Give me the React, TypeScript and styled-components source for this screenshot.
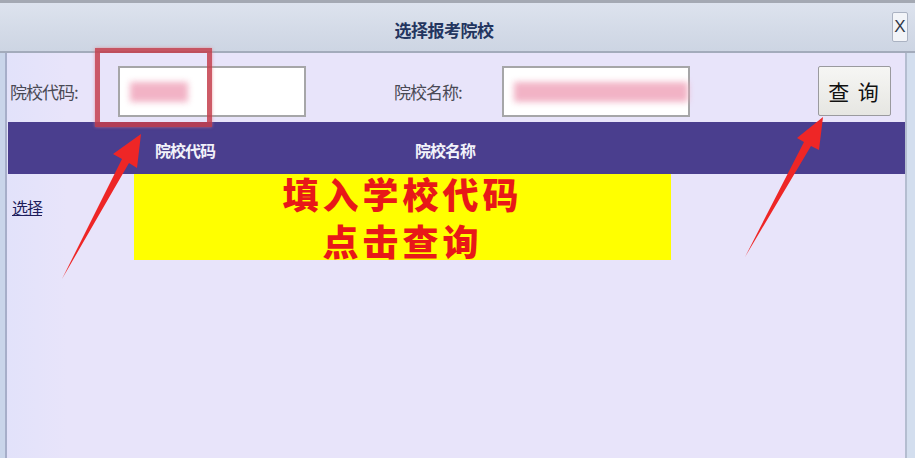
import React from 'react'
import styled, { createGlobalStyle } from 'styled-components'

const GlobalStyle = createGlobalStyle`
  html, body {
    margin: 0;
    padding: 0;
    background: #e8e4fa;
  }
  body {
    font-family: 'Noto Sans CJK SC', 'Noto Sans', sans-serif;
  }
`

const CJK = `'Noto Sans CJK SC', 'Noto Sans', sans-serif`

type Col = { label: string; width: number }

const columns: Col[] = [
  { label: '院校代码', width: 354 },
  { label: '院校名称', width: 166 },
]

const App: React.FC = () => {
  return (
    <>
      <GlobalStyle />
      <Window>
        <TitleBar>
          <Title>选择报考院校</Title>
          <CloseButton>X</CloseButton>
        </TitleBar>

        <Body>
          <LeftEdge />
          <Content>
            {/* 検索条件の行 */}
            <SearchRow>
              <Label>院校代码:</Label>
              <Field $width={188} $gap={90}>
                <Blur $width={58} />
              </Field>
              <Label>院校名称:</Label>
              <Field $width={188} $gap={130}>
                <Blur $width={186} />
              </Field>
              <QueryButton>查&nbsp;询</QueryButton>
            </SearchRow>

            <HeaderRow>
              {columns.map((col) => (
                <HeaderCell key={col.label} $width={col.width}>
                  {col.label}
                </HeaderCell>
              ))}
            </HeaderRow>

            <DataRow>
              <SelectLink href="#">选择</SelectLink>
            </DataRow>
          </Content>
          <RightEdge />
        </Body>

        {/* 注釈（画像上のマーキング） */}
        <Highlight />
        <Note>
          <NoteLine>填入学校代码</NoteLine>
          <NoteLine>点击查询</NoteLine>
        </Note>
        <Marks width="915" height="458" viewBox="0 0 915 458">
          <polygon
            points="141,134 137,168 129,163 62,279 122,159 113,154"
            fill="#ee2626"
          />
          <polygon
            points="823,117 819,150 811,146 745,257 804,142 797,138"
            fill="#ee2626"
          />
        </Marks>
      </Window>
    </>
  )
}

const Window = styled.div`
  position: relative;
  width: 915px;
  height: 458px;
  overflow: hidden;
  display: flex;
  flex-direction: column;
  background: #e8e4fa;
`

const TitleBar = styled.div`
  position: relative;
  height: 48px;
  flex: none;
  display: flex;
  align-items: center;
  justify-content: center;
  border-top: 3px solid #a4a9b3;
  border-bottom: 2px solid #a3abbb;
  background: linear-gradient(to bottom, #dde3ee 0%, #d3dae7 60%, #cdd5e3 100%);
`

const Title = styled.div`
  font-family: ${CJK};
  font-size: 17px;
  font-weight: 700;
  color: #23355f;
  letter-spacing: -0.5px;
  margin-left: -27px;
  margin-top: 5px;
`

const CloseButton = styled.div`
  position: absolute;
  right: 7px;
  top: 9px;
  width: 14px;
  height: 28px;
  display: flex;
  align-items: center;
  justify-content: center;
  font-family: 'Liberation Sans', sans-serif;
  font-size: 17px;
  color: #303848;
  background: #f2f4f8;
  border: 1px solid #aab2c2;
  border-radius: 2px;
`

const Body = styled.div`
  flex: 1;
  display: flex;
  min-height: 0;
`

const LeftEdge = styled.div`
  width: 5px;
  flex: none;
  background: #c9d5ea;
  border-right: 2px solid #a6aec9;
`

const RightEdge = styled.div`
  width: 8px;
  flex: none;
  background: #d3deee;
  border-left: 2px solid #b4bdd0;
`

const Content = styled.div`
  flex: 1;
  display: flex;
  flex-direction: column;
  background: linear-gradient(to right, #e2e2fa 0px, #e8e4fa 60px);
`

const SearchRow = styled.div`
  height: 69px;
  display: flex;
  align-items: center;
  padding-left: 3px;
`

const Label = styled.div`
  font-family: ${CJK};
  font-size: 17px;
  color: #4a4a55;
  letter-spacing: -1px;
  width: 108px;
  flex: none;
  margin-top: 8px;
`

const Field = styled.div<{ $width: number; $gap: number }>`
  width: ${(p) => p.$width}px;
  height: 51px;
  margin-top: 8px;
  margin-right: ${(p) => p.$gap - 2}px;
  box-sizing: border-box;
  border: 2px solid #a6a6a8;
  background: #ffffff;
  display: flex;
  align-items: center;
  padding-left: 10px;
`

const Blur = styled.div<{ $width: number }>`
  width: ${(p) => p.$width}px;
  height: 20px;
  background: #f0a6bc;
  filter: blur(3px);
  opacity: 0.85;
`

const QueryButton = styled.button`
  width: 73px;
  height: 50px;
  margin-top: 6px;
  box-sizing: border-box;
  border: 1px solid #9a9a9e;
  border-radius: 2px;
  background: linear-gradient(to bottom, #f6f6f4 0%, #e6e6e2 100%);
  font-family: ${CJK};
  font-size: 21px;
  color: #111;
  padding: 0;
  letter-spacing: 2px;
`

const HeaderRow = styled.div`
  height: 52px;
  display: flex;
  margin-left: 1px;
  background: #4a3e8e;
`

const HeaderCell = styled.div<{ $width: number }>`
  width: ${(p) => p.$width}px;
  flex: none;
  display: flex;
  align-items: center;
  justify-content: center;
  padding-top: 3px;
  box-sizing: border-box;
  font-family: ${CJK};
  font-size: 16px;
  font-weight: 700;
  color: #f2f2fa;
  letter-spacing: -1px;
`

const DataRow = styled.div`
  height: 66px;
  display: flex;
  align-items: center;
  padding-left: 5px;
`

const SelectLink = styled.a`
  font-family: ${CJK};
  font-size: 16px;
  color: #1d1d5c;
  text-decoration: underline;
  letter-spacing: -1px;
`

const Highlight = styled.div`
  position: absolute;
  left: 95px;
  top: 48px;
  width: 117px;
  height: 79px;
  box-sizing: border-box;
  border: 5px solid rgba(196, 62, 76, 0.85);
  box-shadow: 0 0 3px rgba(230, 120, 130, 0.7);
`

const Note = styled.div`
  position: absolute;
  left: 134px;
  top: 174px;
  width: 537px;
  height: 86px;
  background: #ffff00;
  display: flex;
  flex-direction: column;
  align-items: center;
  justify-content: center;
`

const NoteLine = styled.div`
  flex: none;
  font-family: ${CJK};
  font-size: 36px;
  font-weight: 900;
  line-height: 53px;
  height: 53px;
  margin: -3px 0;
  color: #e81818;
  letter-spacing: 4px;
  white-space: nowrap;
`

const Marks = styled.svg`
  position: absolute;
  left: 0;
  top: 0;
  pointer-events: none;
`

export default App
